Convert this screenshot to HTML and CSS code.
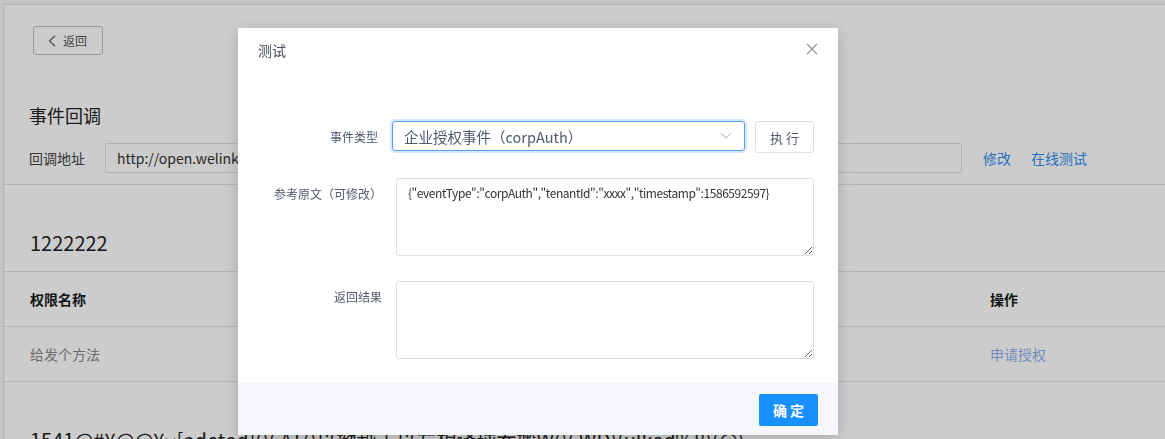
FILE: index.html
```html
<!DOCTYPE html>
<html lang="zh">
<head>
<meta charset="utf-8">
<title>事件回调</title>
<link rel="stylesheet" href="styles.css">
</head>
<body>
<div class="page">
  <div class="top">
    <button class="back"><svg class="back-ico" width="8" height="12" viewBox="0 0 8 12"><path d="M7 0.8 L1.6 6 L7 11.2" fill="none" stroke="#666" stroke-width="1.3"/></svg><span>返回</span></button>
    <h2 class="title">事件回调</h2>
    <div class="addr-row">
      <span class="addr-label">回调地址</span>
      <div class="addr-input">http://open.welink.com/callback/event/receive</div>
      <a class="link">修改</a>
      <a class="link">在线测试</a>
    </div>
  </div>
  <div class="group">
    <h3 class="group-title">1222222</h3>
    <div class="trow thead"><span class="cname">权限名称</span><span class="cop">操作</span></div>
    <div class="trow"><span class="cname muted">给发个方法</span><span class="cop link2">申请授权</span></div>
  </div>
  <div class="group">
    <h3 class="group-title">1541@#¥@@¥›‹[adeted]()( AT()以拗越去以左相译球吞搬W()( WD)(ulked%8)(@)</h3>
  </div>
</div>
<div class="mask"></div>
<div class="modal">
  <div class="modal-head">测试</div>
  <svg class="close" width="12" height="12" viewBox="0 0 12 12"><path d="M1 1 L11 11 M11 1 L1 11" stroke="#999" stroke-width="1.4" fill="none"/></svg>
  <div class="modal-body">
    <div class="frow">
      <span class="flabel flabel-first">事件类型</span>
      <div class="fctl ctl-first">
        <div class="select"><span>企业授权事件（corpAuth）</span><svg class="arrow" width="12" height="8" viewBox="0 0 12 8"><path d="M1 1.5 L6 6 L11 1.5" fill="none" stroke="#c5c8ce" stroke-width="1.2"/></svg></div>
        <button class="exec">执 行</button>
      </div>
    </div>
    <div class="frow">
      <span class="flabel flabel-ta">参考原文（可修改）</span>
      <div class="fctl"><textarea class="ta">{"eventType":"corpAuth","tenantId":"xxxx","timestamp":1586592597}</textarea></div>
    </div>
    <div class="frow">
      <span class="flabel flabel-ta">返回结果</span>
      <div class="fctl"><textarea class="ta"></textarea></div>
    </div>
  </div>
  <div class="modal-foot"><button class="ok">确 定</button></div>
</div>
</body>
</html>
```
FILE: styles.css
```css
* { box-sizing: border-box; }
html, body { margin: 0; padding: 0; }
body {
  background: #f4f5f7;
  font-family: "Noto Sans CJK SC", "Noto Sans", sans-serif;
  color: #333;
  width: 1165px;
  height: 439px;
  overflow: hidden;
}
.page {
  margin: 4px 0 0 3px;
  background: #fff;
  border-top: 1px solid #dfe4ec;
  border-left: 1px solid #dfe4ec;
  height: 435px;
  overflow: hidden;
}
.top {
  padding: 21px 0 11px 0;
  border-bottom: 1px solid #dfe4ec;
}
.back {
  margin-left: 29px;
  width: 70px;
  height: 29px;
  border: 1px solid #bfbfbf;
  border-radius: 3px;
  background: #fff;
  display: flex;
  align-items: center;
  padding: 0 0 0 14px;
  font-family: inherit;
  font-size: 12px;
  color: #555;
}
.back-ico { margin-right: 7px; }
.title {
  margin: 48px 0 0 25px;
  font-size: 18px;
  font-weight: normal;
  line-height: 24px;
  color: #222;
}
.addr-row {
  margin: 16px 0 0 25px;
  display: flex;
  align-items: center;
  height: 30px;
  font-size: 14px;
}
.addr-label { width: 76px; color: #444; }
.addr-input {
  width: 857px;
  height: 30px;
  border: 1px solid #dcdee2;
  border-radius: 2px;
  padding: 0 11px;
  line-height: 28px;
  color: #333;
  white-space: nowrap;
  overflow: hidden;
}
.link { color: #2d8cf0; margin-left: 21px; }
.link + .link { margin-left: 20px; }
.group-title {
  margin: 0;
  padding: 46px 0 16px 26px;
  font-size: 20px;
  font-weight: normal;
  line-height: 24px;
  color: #222;
  border-bottom: 1px solid #dfe4ec;
  white-space: nowrap;
}
.trow {
  display: flex;
  align-items: center;
  height: 55px;
  border-bottom: 1px solid #dfe4ec;
  font-size: 14px;
  padding-left: 26px;
}
.thead { font-weight: bold; color: #1b1b1b; }
.cname { width: 960px; }
.muted { color: #888; }
.link2 { color: #8db1ee; }
.mask {
  position: fixed;
  inset: 0;
  background: rgba(0, 0, 0, 0.2);
}
.modal {
  position: fixed;
  left: 238px;
  top: 28px;
  width: 600px;
  height: 406px;
  background: #fff;
  box-shadow: 0 4px 14px rgba(0, 0, 0, 0.18);
  display: flex;
  flex-direction: column;
}
.modal-head {
  padding: 11px 20px 0;
  line-height: 22px;
  font-size: 14px;
  color: #464c5b;
}
.close { position: absolute; right: 20px; top: 15px; }
.modal-body {
  padding: 60px 24px 24px 20px;
  flex: 1;
  display: flex;
  flex-direction: column;
  gap: 25px;
}
.frow { display: flex; }
.flabel {
  width: 124px;
  text-align: right;
  font-size: 12px;
  color: #515a6e;
  line-height: 18px;
  flex: none;
}
.flabel-first { padding-right: 4px; align-self: center; }
.flabel-ta { padding-top: 7px; }
.fctl { margin-left: 14px; display: flex; }
.ctl-first { margin-left: 10px; align-items: flex-start; gap: 10px; }
.select {
  width: 353px;
  height: 30px;
  border: 1px solid #57a3f3;
  border-radius: 3px;
  box-shadow: 0 0 0 2px rgba(45, 140, 240, 0.2);
  display: flex;
  align-items: center;
  justify-content: space-between;
  padding: 0 12px 0 11px;
  font-size: 14.5px;
  color: #515a6e;
}
.exec {
  width: 59px;
  height: 32px;
  border: 1px solid #dcdee2;
  border-radius: 3px;
  background: #fff;
  font-family: inherit;
  font-size: 13px;
  color: #515a6e;
}
.ta {
  width: 418px;
  height: 78px;
  border: 1px solid #dcdee2;
  border-radius: 3px;
  padding: 5px 11px;
  font-family: inherit;
  font-size: 12px;
  letter-spacing: -0.45px;
  line-height: 18px;
  color: #333;
}
.modal-foot {
  height: 52px;
  background: #f5f7fa;
  padding: 11px 20px 9px;
  display: flex;
  justify-content: flex-end;
}
.ok {
  width: 59px;
  height: 32px;
  border: 0;
  border-radius: 2px;
  background: #1890ff;
  color: #fff;
  font-family: inherit;
  font-size: 14px;
  font-weight: bold;
}
```
